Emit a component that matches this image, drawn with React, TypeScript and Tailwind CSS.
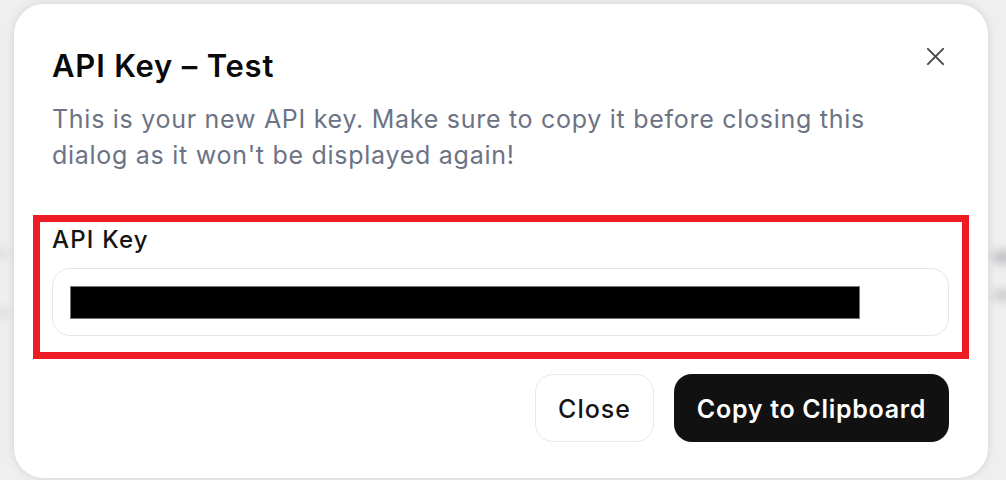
import React from "react";

export default function App() {
  return (
    <div
      className="relative w-[1006px] h-[480px] overflow-hidden bg-[#efefef] pt-[4px] pl-[14px]"
      style={{ fontFamily: "Inter, 'Noto Sans', sans-serif" }}
    >
      {/* blurred background content peeking through on the right */}
      <div className="absolute left-[992px] top-[250px] w-[30px] h-[14px] rounded-full bg-[#c4c4c8] blur-[4px]" />
      <div className="absolute left-[992px] top-[289px] w-[30px] h-[12px] rounded-full bg-[#cfcfd3] blur-[4px]" />
      <div className="absolute left-[-10px] top-[248px] w-[20px] h-[10px] rounded-full bg-[#dedede] blur-[4px]" />
      <div className="absolute left-[-10px] top-[308px] w-[20px] h-[10px] rounded-full bg-[#dedede] blur-[4px]" />

      <div className="relative w-[974px] h-[474px] rounded-[30px] bg-white shadow-[0_0_10px_rgba(0,0,0,0.12)] pt-[44px] pl-[38px] pr-[39px] flex flex-col">
        <button className="absolute right-[40px] top-[39px] w-[26px] h-[26px] flex items-center justify-center text-[#4a4a4a]">
          <svg width="19" height="19" viewBox="0 0 20 20" fill="none" stroke="currentColor" strokeWidth="2.1" strokeLinecap="round">
            <path d="M2 2 L18 18" />
            <path d="M18 2 L2 18" />
          </svg>
        </button>

        <h2 className="text-[31px] leading-[36px] font-semibold text-[#0a0a0a] tracking-[0.8px]">
          API Key – Test
        </h2>
        <p className="mt-[17px] text-[25px] leading-[36px] text-[#6b7385] tracking-[0.72px]">
          This is your new API key. Make sure to copy it before closing this
          <br />
          dialog as it won't be displayed again!
        </p>

        <div className="mt-[42px] -ml-[19px] w-[936px] border-[7px] border-[#ed1c24] pl-[12px] pr-[13px] pt-[4px] pb-[16px] flex flex-col">
          <label className="text-[24px] leading-[28px] font-medium text-[#141414] tracking-[1.2px]">API Key</label>
          <div className="mt-[14px] h-[68px] rounded-[18px] border border-[#e6e6e6] bg-white flex items-center pl-[17px]">
            <div className="w-[790px] h-[33px] bg-black border border-[#777]" />
          </div>
        </div>

        <div className="mt-[15px] flex justify-end gap-[20px]">
          <button className="w-[119px] h-[68px] pt-[4px] rounded-[18px] border border-[#e8e8e8] bg-white text-[25px] font-medium text-[#141414] tracking-[1px]">
            Close
          </button>
          <button className="w-[275px] h-[68px] pt-[4px] rounded-[18px] bg-[#111111] text-[25px] font-semibold text-white tracking-[0.7px]">
            Copy to Clipboard
          </button>
        </div>
      </div>
    </div>
  );
}
